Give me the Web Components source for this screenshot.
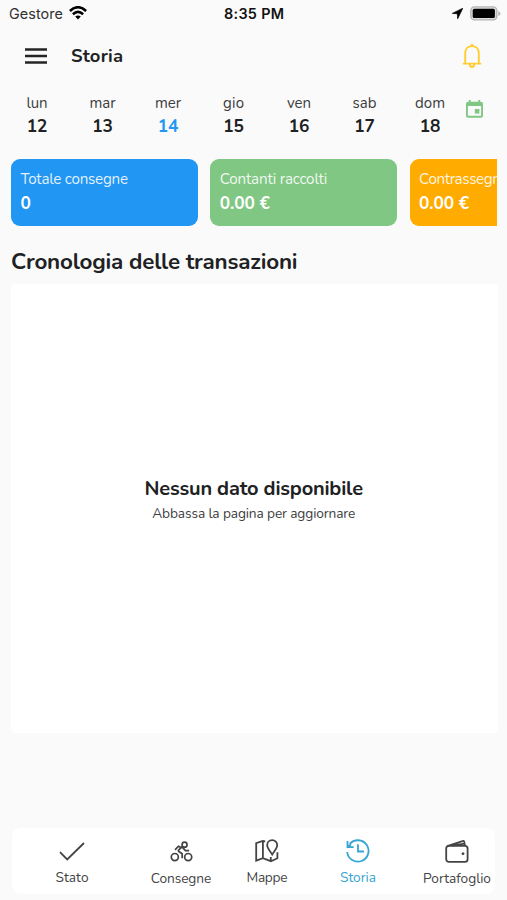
<!DOCTYPE html>
<html lang="it"><head><meta charset="utf-8"><title>Storia</title>
<style>
html,body{margin:0;height:900px;overflow:hidden;background:#fafafa}
body{font-family:Nunito,Lato,"Noto Sans",sans-serif;color:#202122}
</style></head><body>
<delivery-app></delivery-app>
<script>
const define = (name, markup, after) => customElements.define(name, class extends HTMLElement {
  connectedCallback() {
    if (this.shadowRoot) return;
    this.attachShadow({mode: 'open'}).innerHTML = typeof markup === 'function' ? markup(this) : markup;
    if (after) after(this);
  }
});

/* One line of text, tracked so that it spans the width given in "w". */
define('tracked-text', el => `<style>
:host{display:block;white-space:nowrap;width:${el.getAttribute('w')}px;height:1.4em;line-height:1.4em}
span{display:inline-block;vertical-align:top}</style><span>${el.getAttribute('text')}</span>`, el => {
  const s = el.shadowRoot.querySelector('span');
  const gap = (+el.getAttribute('w') - s.getBoundingClientRect().width) / Math.max(1, el.getAttribute('text').length - 1);
  if (el.getAttribute('text').length > 1) s.style.letterSpacing = gap.toFixed(3) + 'px';
});

define('status-bar', `<style>
:host{display:grid;grid-template-columns:1fr auto 1fr;height:28px;padding:0 6px 0 9px;align-items:center;font-family:Inter,sans-serif;font-size:14.4px;color:#111}
.l,.r{display:flex;align-items:center}.l{gap:6px;color:#303030}.r{justify-content:flex-end;gap:7px}
.c{font-weight:600;margin-right:2px}svg{display:block}.l svg{margin-top:-2px}.r svg{margin-top:-1px}</style>
<div class="l"><tracked-text w="54" text="Gestore"></tracked-text>
<svg width="18" height="14" viewBox="0 0 18 14" fill="none" stroke="#000" stroke-width="2.6"><path d="M.9 5Q9-2.5 17.1 5M3.9 8.3Q9 3.6 14.1 8.3"/><path d="M6.2 10.6Q9 8.4 11.8 10.6L9 13.6Z" fill="#000" stroke="none"/></svg></div>
<div class="c"><tracked-text w="60" text="8:35 PM"></tracked-text></div>
<div class="r"><svg width="11" height="11" viewBox="0 0 11 11"><path d="M10.8.2.3 5.4 5.3 5.7 5.7 10.8Z" fill="#000" stroke="#000" stroke-width=".7"/></svg>
<svg width="31" height="15" viewBox="0 0 31 15"><rect x=".8" y=".9" width="26" height="13" rx="3.6" fill="#ddd" stroke="#b4b4b4" stroke-width="1.4"/><rect x="2.7" y="2.8" width="22.2" height="9.2" rx="1.6" fill="#000"/><path d="M28.3 5q2.2 1 2.2 2.5t-2.2 2.5z" fill="#b4b4b4"/></svg></div>`);

define('app-header', `<style>
:host{display:flex;height:56px;padding:0 25.5px 0 25px;align-items:center;box-sizing:border-box;font-size:18.4px;font-weight:700}
svg{display:block}.m{margin-right:24px}.b{margin-left:auto}</style>
<svg class="m" width="22" height="16" viewBox="0 0 22 16"><path d="M0 1.5h22M0 8h22M0 14.5h22" stroke="#252525" stroke-width="2.4"/></svg>
<tracked-text w="52" text="Storia"></tracked-text>
<svg class="b" width="20" height="26" viewBox="0 0 20 26" fill="none" stroke="#fdcd32" stroke-width="1.9"><path d="M.8 20.6h18.4M3.2 20.5V10.2C3.2 5.9 6.1 3.1 10 3.1s6.8 2.8 6.8 7.1v10.3M7.7 21c0 1.8 1 3 2.3 3s2.3-1.2 2.3-3"/><path d="M10 1v2.5" stroke-width="2.4"/></svg>`);

define('week-day', el => `<style>
:host{display:flex;flex-direction:column;align-items:center;width:65.5px}
.d{font-size:15px;color:#3c3d3e}.n{font-size:17.3px;font-weight:700;margin-top:.5px;color:${el.hasAttribute('on')?'#2196f3':'#202122'}}</style>
<tracked-text class="d" w="${el.getAttribute('w')}" text="${el.getAttribute('day')}"></tracked-text>
<tracked-text class="n" w="20.5" text="${el.getAttribute('num')}"></tracked-text>`);

define('week-strip', `<style>:host{display:flex;height:74px;padding:9px 0 0 4.3px;box-sizing:border-box}svg{display:block;margin:7px 0 0 3px}</style>
<week-day day="lun" num="12" w="21"></week-day><week-day day="mar" num="13" w="26"></week-day><week-day day="mer" num="14" w="26" on></week-day><week-day day="gio" num="15" w="21"></week-day><week-day day="ven" num="16" w="24"></week-day><week-day day="sab" num="17" w="24"></week-day><week-day day="dom" num="18" w="30"></week-day>
<svg width="17" height="18" viewBox="0 0 17 18" fill="#81c784"><path fill-rule="evenodd" d="M2.8 0h1.9v1.7h7.6V0h1.9v1.7h.8q2 0 2 2v12q0 2-2 2H2q-2 0-2-2v-12q0-2 2-2h.8ZM1.9 6v9.8h13.2V6Z"/><path d="M8.8 9h4.6v4.6H8.8z"/></svg>`);

define('stat-card', el => `<style>
:host{display:block;flex:none;box-sizing:border-box;width:187px;height:67px;border-radius:9px;padding:10.6px 9.5px;background:${el.getAttribute('bg')};color:#fff}
.a{font-size:15.2px;color:#ffffffe0}.v{font-size:17.3px;font-weight:700;margin-top:1.6px}</style>
<tracked-text class="a" w="${el.getAttribute('lw')}" text="${el.getAttribute('label')}"></tracked-text>
<tracked-text class="v" w="${el.getAttribute('vw')}" text="${el.getAttribute('value')}"></tracked-text>`);

define('stat-row', `<style>:host{display:flex;gap:12.3px;margin:.5px 10px 0 11px;overflow:hidden}</style>
<stat-card bg="#2196f3" label="Totale consegne" lw="107.5" value="0" vw="10"></stat-card>
<stat-card bg="#81c784" label="Contanti raccolti" lw="107.5" value="0.00 €" vw="50"></stat-card>
<stat-card bg="#ffab00" label="Contrassegni" lw="85" value="0.00 €" vw="50"></stat-card>`);

define('transaction-history', `<style>
:host{display:block;margin:0 9.5px 0 11px}
.h{font-size:22.4px;font-weight:700;margin-top:20.6px}
.p{display:flex;flex-direction:column;align-items:center;justify-content:center;height:449px;margin-top:6.5px;background:#fff;border-radius:4px;box-sizing:border-box;padding-bottom:18.5px}
.t{font-size:20px;font-weight:700;margin-right:1px}.s{font-size:13.7px;color:#3c3d3e;margin-top:1.6px;margin-right:1px}</style>
<tracked-text class="h" w="286.5" text="Cronologia delle transazioni"></tracked-text>
<div class="p"><tracked-text class="t" w="218.5" text="Nessun dato disponibile"></tracked-text><tracked-text class="s" w="203" text="Abbassa la pagina per aggiornare"></tracked-text></div>`);

define('nav-item', el => `<style>
:host{display:flex;flex-direction:column;align-items:center;font-size:13.7px;color:${el.hasAttribute('on')?'#35a5d3':'#444'}}
.i{height:24px;display:flex;align-items:center}tracked-text{margin-top:${el.getAttribute('gap')||5}px}</style>
<div class="i"><slot></slot></div><tracked-text w="${el.getAttribute('w')}" text="${el.getAttribute('label')}"></tracked-text>`);

define('bottom-nav', `<style>
:host{display:grid;grid-template-columns:120px 98px 74px 108px 90px;height:66px;margin:95px 12px 0;box-sizing:border-box;padding-top:11.5px;background:#fff;border-radius:9px}
nav-item{justify-self:center}svg{display:block;fill:none;stroke:currentColor;stroke-width:1.8}</style>
<nav-item label="Stato" w="33"><svg width="26" height="20" viewBox="0 0 26 20"><path d="M1 11.2 8.2 18.5 25 2"/></svg></nav-item>
<nav-item label="Consegne" w="60.5" gap="6"><svg width="23" height="21" viewBox="0 0 24 22"><circle cx="5" cy="16.8" r="3.7"/><circle cx="19" cy="16.8" r="3.7"/><circle cx="15.2" cy="3.8" r="2.6"/><path d="M12.7 18v-4.6L9.2 11q-1-.8 0-1.8l3.4-3.1 3.5 4H20M12.3 7.2 8.8 5.5l-3.6 3.8"/></svg></nav-item>
<nav-item label="Mappe" w="41"><svg width="24" height="24" viewBox="0 0 24 24"><path d="M10.2 2.4 7.8 2 1.2 4.2v17.5l6.7-2.5 8 3 6.5-3v-6M7.9 2v17.2M15.8 22v-4M17.2 1.2c-3 0-5 2.2-5 5 0 3.2 3.3 6.3 5 9.3 1.7-3 5-6.1 5-9.3 0-2.8-2-5-5-5Z"/></svg></nav-item>
<nav-item label="Storia" w="36" on><svg width="24" height="24" viewBox="0 0 24 24"><path d="M1.2 13A10.7 10.7 0 1 0 3.7 5M1.5 2v6.2h6.2M1.8 8 5 5.2M12 5.2v7.3h6"/></svg></nav-item>
<nav-item label="Portafoglio" w="68" gap="6"><svg width="24" height="24" viewBox="0 0 24 24"><rect x="1.2" y="6.8" width="21.4" height="16" rx="2.6"/><path d="M2.2 7.2 17.5 2.1q1.6-.5 1.8 1l.7 3.5M7 6.7l12.5-2"/><circle cx="18" cy="14.7" r="1" fill="currentColor" stroke-width="1"/></svg></nav-item>`);

define('delivery-app', `<style>:host{display:flex;flex-direction:column;width:507px;height:900px;overflow:hidden}:host>*{flex:none}</style>
<status-bar></status-bar><app-header></app-header><week-strip></week-strip><stat-row></stat-row><transaction-history></transaction-history><bottom-nav></bottom-nav>`);
</script>
</body></html>
